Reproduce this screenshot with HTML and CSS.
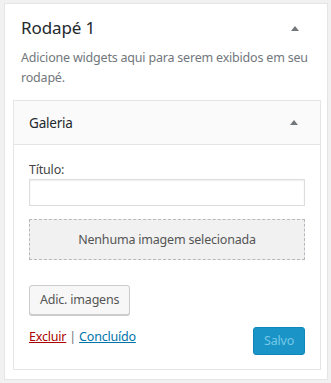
FILE: index.html
```html
<!DOCTYPE html>
<html lang="pt-BR">

<head>
    <meta charset="UTF-8">
    <meta name="viewport" content="width=device-width, initial-scale=1.0">
    <title>Widgets</title>
    <link rel="stylesheet" href="styles.css">
</head>

<body>

    <div class="sidebar">
        <div class="sidebar-name">
            <h2>Rodapé 1</h2>
            <span class="toggle-arrow"></span>
        </div>
        <p class="sidebar-description">Adicione widgets aqui para serem exibidos em seu rodapé.</p>

        <div class="widget">
            <div class="widget-top">
                <h3>Galeria</h3>
                <span class="toggle-arrow"></span>
            </div>
            <div class="widget-inside">
                <label class="field-label" for="widget-title">Título:</label>
                <input class="field-input" type="text" id="widget-title">

                <div class="gallery-preview">Nenhuma imagem selecionada</div>

                <button class="button" type="button">Adic. imagens</button>

                <div class="widget-control-actions">
                    <div class="widget-control-links">
                        <a href="#" class="link-delete">Excluir</a> | <a href="#" class="link-close">Concluído</a>
                    </div>
                    <button class="button button-primary" type="button" disabled>Salvo</button>
                </div>
            </div>
        </div>
    </div>

</body>

</html>
```

FILE: styles.css
```css
* {
    margin: 0;
    padding: 0;
    box-sizing: border-box;
}

body {
    background: #f1f1f1;
    font-family: 'Noto Sans', 'Open Sans', sans-serif;
    font-size: 12.5px;
    letter-spacing: -0.2px;
    color: #444;
    padding: 3px 3px 3px 4px;
}

.sidebar {
    background: #fff;
    border: 1px solid #e5e5e5;
    height: 377px;
    padding: 0 6px 0 8px;
}

.sidebar-name {
    display: flex;
    justify-content: space-between;
    align-items: center;
    padding: 12px 22px 0 8px;
}

.sidebar-name h2 {
    font-size: 17px;
    font-weight: 400;
    letter-spacing: -0.1px;
    color: #23282d;
    line-height: 24px;
}

.toggle-arrow {
    width: 0;
    height: 0;
    border-left: 4px solid transparent;
    border-right: 4px solid transparent;
    border-bottom: 5px solid #72777c;
}

.sidebar-description {
    padding: 8px 8px 0 8px;
    color: #72777c;
    line-height: 20px;
}

.widget {
    margin-top: 12px;
    border: 1px solid #e5e5e5;
}

.widget-top {
    display: flex;
    justify-content: space-between;
    align-items: center;
    height: 44px;
    background: #fafafa;
    border-bottom: 1px solid #e5e5e5;
    padding: 0 22px 0 15px;
}

.widget-top h3 {
    font-size: 13.5px;
    font-weight: 400;
    color: #23282d;
}

.widget-inside {
    padding: 16px 15px 14px 15px;
}

.field-label {
    display: block;
    color: #444;
    line-height: 18px;
}

.field-input {
    display: block;
    width: 100%;
    height: 27px;
    border: 1px solid #ddd;
    box-shadow: inset 0 1px 2px rgba(0, 0, 0, 0.07);
    font-family: inherit;
}

.gallery-preview {
    margin-top: 13px;
    height: 41px;
    border: 1px dashed #b4b9be;
    background: #f1f1f1;
    color: #555;
    display: flex;
    justify-content: center;
    align-items: center;
}

.button {
    display: block;
    margin-top: 25px;
    height: 30px;
    padding: 0 10px 1px;
    background: #f7f7f7;
    border: 1px solid #ccc;
    border-radius: 3px;
    box-shadow: 0 1px 0 #ccc;
    color: #555;
    font-family: inherit;
    font-size: 12.5px;
    letter-spacing: -0.2px;
}

.widget-control-actions {
    display: flex;
    justify-content: space-between;
    align-items: flex-start;
    margin-top: 12px;
}

.widget-control-links {
    color: #72777c;
    line-height: 20px;
}

.link-delete {
    color: #a00;
}

.link-close {
    color: #0073aa;
}

.button-primary {
    margin-top: 0;
    height: 28px;
    padding: 0 10px 1px;
    background: #1a93c6;
    border: 1px solid #0e89bd;
    box-shadow: none;
    color: #74c9e6;
}
```
